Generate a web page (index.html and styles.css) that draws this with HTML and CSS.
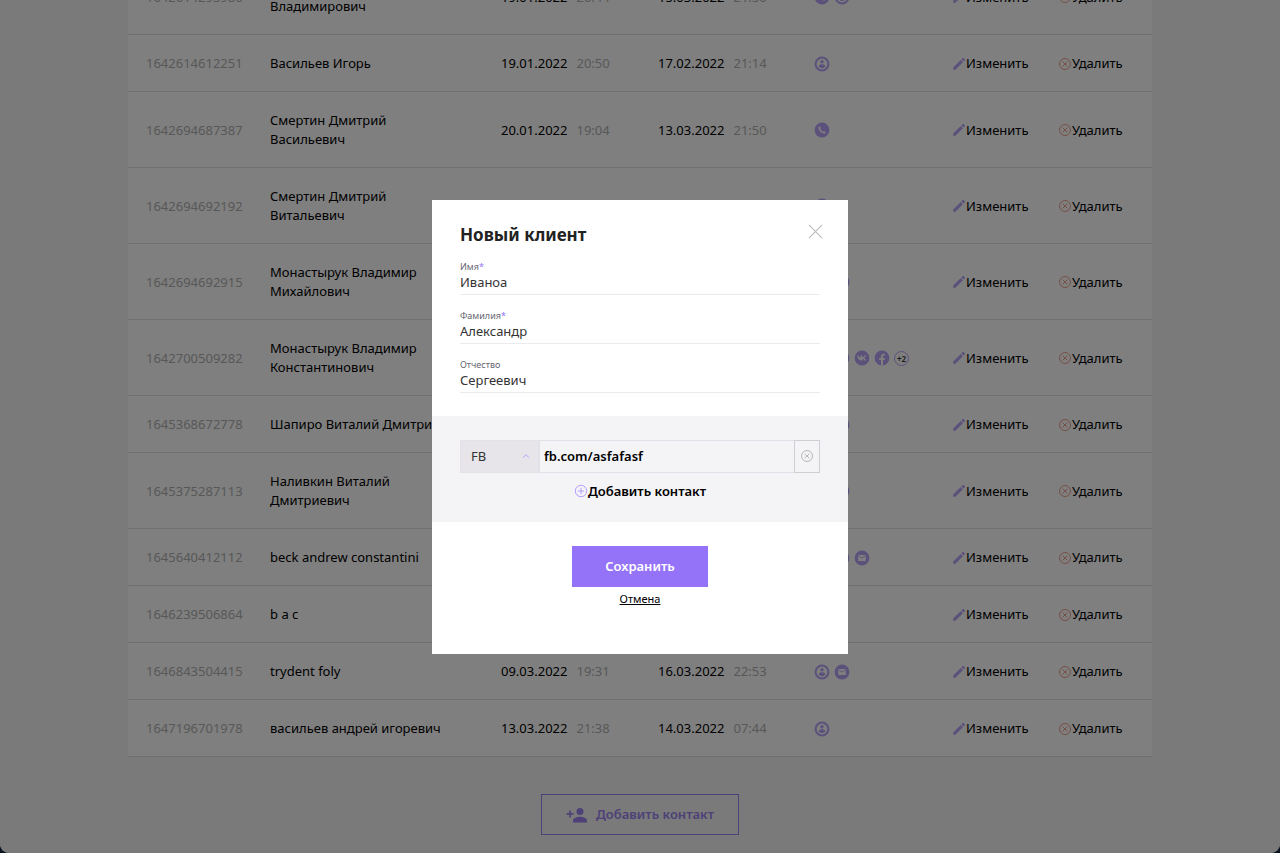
FILE: index.html
```html
<!DOCTYPE html>
<html lang="ru">
<head>
<meta charset="utf-8">
<meta name="viewport" content="width=device-width, initial-scale=1">
<title>Клиенты</title>
<link rel="stylesheet" href="styles.css">
</head>
<body>
<svg class="sprite" aria-hidden="true">
  <symbol id="user" viewBox="0 0 16 16"><circle cx="8" cy="8" r="6.4" fill="none" stroke="currentColor" stroke-width="2"/><circle cx="8" cy="5.8" r="1.7" fill="currentColor"/><path d="M4.6 10.2C5 8.8 6.900 8.300 8 8.300s3 .5 3.400 1.900C10.700 11.300 9.400 12 8 12s-2.700-.7-3.400-1.800z" fill="currentColor"/></symbol>
  <symbol id="phone" viewBox="0 0 16 16"><circle cx="8" cy="8" r="7.400" fill="currentColor"/><path d="M5.600 4.200 4.400 5.100C4.300 8.600 7.400 11.700 10.900 11.600l.9-1.200-1.700-1.300-1.100.7C7.800 9.200 6.800 8.200 6.300 7l.7-1.100z" fill="#fff"/></symbol>
  <symbol id="mail" viewBox="0 0 16 16"><circle cx="8" cy="8" r="7.400" fill="currentColor"/><rect x="4.200" y="5" width="7.600" height="6" rx=".6" fill="#fff"/><path d="m4.600 5.900 3.400 2.200 3.400-2.200" fill="none" stroke="currentColor" stroke-width=".9"/></symbol>
  <symbol id="vk" viewBox="0 0 16 16"><circle cx="8" cy="8" r="7.400" fill="currentColor"/><path d="M3.200 5.500h1.500c.3 1.500.9 2.500 1.700 2.800V5.500h2v2.100c.8-.2 1.500-1.100 1.900-2.100h1.600c-.3 1.100-1 2-1.800 2.500.9.500 1.700 1.300 2.100 2.500h-1.700c-.4-.9-1.100-1.500-2.100-1.700v1.700h-.6C5.100 10.500 3.300 8.700 3.200 5.500z" fill="#fff"/></symbol>
  <symbol id="fb" viewBox="0 0 16 16"><circle cx="8" cy="8" r="7.400" fill="currentColor"/><path d="M7 15.400V10H5.200V8H7V6.500c0-1.900 1-2.800 2.600-2.800.6 0 1.100.1 1.400.1v1.700h-.9C9.300 5.500 9 6 9 6.600V8h1.900l-.3 2H9v5.400z" fill="#fff"/></symbol>
  <symbol id="pencil" viewBox="0 0 14 14"><path d="M1.200 10.600 8.700 3.100l2.200 2.200-7.500 7.500H1.200zM9.400 2.400l1.300-1.300c.3-.3.600-.3.900 0l1.300 1.300c.3.300.3.600 0 .9l-1.300 1.300z" fill="currentColor"/></symbol>
  <symbol id="cancel" viewBox="0 0 14 14"><g fill="none" stroke="currentColor"><circle cx="7" cy="7" r="5.500"/><path d="m4.700 4.700 4.600 4.600m0-4.600L4.700 9.300"/></g></symbol>
  <symbol id="plus" viewBox="0 0 14 14"><g fill="none" stroke="currentColor"><circle cx="7" cy="7" r="5.700"/><path d="M7 3.800v6.400M3.800 7h6.400"/></g></symbol>
</svg>

<div class="window">
  <main class="page">
    <table class="clients">
      <colgroup><col class="col-id"><col><col class="col-created"><col class="col-changed"><col class="col-contacts"><col class="col-edit"><col class="col-delete"></colgroup>
      <tbody>
        <tr><td class="id">1642614293980</td><td class="name">Смертин Дмитрий Владимирович</td><td>19.01.2022<span class="time">20:44</span></td><td>15.03.2022<span class="time">21:50</span></td><td><div class="contacts"><svg><use href="#phone"/></svg><svg><use href="#user"/></svg></div></td><td><button class="action edit"><svg><use href="#pencil"/></svg>Изменить</button></td><td><button class="action delete"><svg><use href="#cancel"/></svg>Удалить</button></td></tr>
        <tr><td class="id">1642614612251</td><td class="name">Васильев Игорь</td><td>19.01.2022<span class="time">20:50</span></td><td>17.02.2022<span class="time">21:14</span></td><td><div class="contacts"><svg><use href="#user"/></svg></div></td><td><button class="action edit"><svg><use href="#pencil"/></svg>Изменить</button></td><td><button class="action delete"><svg><use href="#cancel"/></svg>Удалить</button></td></tr>
        <tr><td class="id">1642694687387</td><td class="name">Смертин Дмитрий Васильевич</td><td>20.01.2022<span class="time">19:04</span></td><td>13.03.2022<span class="time">21:50</span></td><td><div class="contacts"><svg><use href="#phone"/></svg></div></td><td><button class="action edit"><svg><use href="#pencil"/></svg>Изменить</button></td><td><button class="action delete"><svg><use href="#cancel"/></svg>Удалить</button></td></tr>
        <tr><td class="id">1642694692192</td><td class="name">Смертин Дмитрий Витальевич</td><td></td><td></td><td><div class="contacts"><svg><use href="#user"/></svg></div></td><td><button class="action edit"><svg><use href="#pencil"/></svg>Изменить</button></td><td><button class="action delete"><svg><use href="#cancel"/></svg>Удалить</button></td></tr>
        <tr><td class="id">1642694692915</td><td class="name">Монастырук Владимир Михайлович</td><td></td><td></td><td><div class="contacts"><svg><use href="#phone"/></svg><svg><use href="#user"/></svg></div></td><td><button class="action edit"><svg><use href="#pencil"/></svg>Изменить</button></td><td><button class="action delete"><svg><use href="#cancel"/></svg>Удалить</button></td></tr>
        <tr><td class="id">1642700509282</td><td class="name">Монастырук Владимир Константинович</td><td></td><td></td><td><div class="contacts"><svg><use href="#phone"/></svg><svg><use href="#mail"/></svg><svg><use href="#vk"/></svg><svg><use href="#fb"/></svg><span class="more">+2</span></div></td><td><button class="action edit"><svg><use href="#pencil"/></svg>Изменить</button></td><td><button class="action delete"><svg><use href="#cancel"/></svg>Удалить</button></td></tr>
        <tr><td class="id">1645368672778</td><td class="name one-line">Шапиро Виталий Дмитриевич</td><td></td><td></td><td><div class="contacts"><svg><use href="#phone"/></svg><svg><use href="#user"/></svg></div></td><td><button class="action edit"><svg><use href="#pencil"/></svg>Изменить</button></td><td><button class="action delete"><svg><use href="#cancel"/></svg>Удалить</button></td></tr>
        <tr><td class="id">1645375287113</td><td class="name">Наливкин Виталий Дмитриевич</td><td></td><td></td><td><div class="contacts"><svg><use href="#phone"/></svg><svg><use href="#mail"/></svg></div></td><td><button class="action edit"><svg><use href="#pencil"/></svg>Изменить</button></td><td><button class="action delete"><svg><use href="#cancel"/></svg>Удалить</button></td></tr>
        <tr><td class="id">1645640412112</td><td class="name">beck andrew constantini</td><td></td><td></td><td><div class="contacts"><svg><use href="#phone"/></svg><svg><use href="#user"/></svg><svg><use href="#mail"/></svg></div></td><td><button class="action edit"><svg><use href="#pencil"/></svg>Изменить</button></td><td><button class="action delete"><svg><use href="#cancel"/></svg>Удалить</button></td></tr>
        <tr><td class="id">1646239506864</td><td class="name">b a c</td><td></td><td></td><td></td><td><button class="action edit"><svg><use href="#pencil"/></svg>Изменить</button></td><td><button class="action delete"><svg><use href="#cancel"/></svg>Удалить</button></td></tr>
        <tr><td class="id">1646843504415</td><td class="name">trydent foly</td><td>09.03.2022<span class="time">19:31</span></td><td>16.03.2022<span class="time">22:53</span></td><td><div class="contacts"><svg><use href="#user"/></svg><svg><use href="#mail"/></svg></div></td><td><button class="action edit"><svg><use href="#pencil"/></svg>Изменить</button></td><td><button class="action delete"><svg><use href="#cancel"/></svg>Удалить</button></td></tr>
        <tr><td class="id">1647196701978</td><td class="name">васильев андрей игоревич</td><td>13.03.2022<span class="time">21:38</span></td><td>14.03.2022<span class="time">07:44</span></td><td><div class="contacts"><svg><use href="#user"/></svg></div></td><td><button class="action edit"><svg><use href="#pencil"/></svg>Изменить</button></td><td><button class="action delete"><svg><use href="#cancel"/></svg>Удалить</button></td></tr>
      </tbody>
    </table>
    <button class="add-client">
      <svg viewBox="0 0 22 16"><circle cx="14" cy="4.500" r="3.500" fill="currentColor"/><path d="M7 15.500v-2c0-2.500 4.500-3.700 7-3.700s7 1.200 7 3.700v2zM3.200 3.500h1.700v2.600h2.600v1.700H4.900v2.600H3.200V7.800H.6V6.100h2.600z" fill="currentColor"/></svg>
      Добавить контакт
    </button>
  </main>

  <div class="overlay">
    <section class="modal" role="dialog" aria-modal="true" aria-labelledby="modal-title">
      <form>
        <div class="fields">
          <header class="modal-head">
            <h2 id="modal-title">Новый клиент</h2>
            <button class="close" type="button" aria-label="Закрыть"><svg viewBox="0 0 16 16"><path d="m1 1 14 14M15 1 1 15" fill="none" stroke="currentColor" stroke-width="1.200"/></svg></button>
          </header>
          <div class="field"><label for="first">Имя<span class="star">*</span></label><input id="first" type="text" value="Иваноа"></div>
          <div class="field"><label for="last">Фамилия<span class="star">*</span></label><input id="last" type="text" value="Александр"></div>
          <div class="field"><label for="middle">Отчество</label><input id="middle" type="text" value="Сергеевич"></div>
        </div>
        <div class="contact-area">
          <div class="contact-row">
            <div class="select-wrap">
              <select aria-label="Тип контакта"><option>FB</option></select>
              <svg class="chevron" viewBox="0 0 8 6"><path d="m1 4.700 3-3 3 3" fill="none" stroke="currentColor"/></svg>
            </div>
            <input class="contact-value" type="text" value="fb.com/asfafasf" aria-label="Контакт">
            <button class="contact-remove" type="button" aria-label="Удалить контакт"><svg><use href="#cancel"/></svg></button>
          </div>
          <button class="add-contact" type="button"><svg><use href="#plus"/></svg>Добавить контакт</button>
        </div>
        <footer class="modal-foot">
          <button class="save" type="submit">Сохранить</button>
          <button class="dismiss" type="button">Отмена</button>
        </footer>
      </form>
    </section>
  </div>
</div>
</body>
</html>
```
FILE: styles.css
```css
* { box-sizing: border-box; }

body {
  margin: 0;
  background: #0b1420;
  color: #000;
  font: 13px/19px "Noto Sans", "Open Sans", sans-serif;
}

button, input, select {
  margin: 0;
  padding: 0;
  border: 0;
  border-radius: 0;
  background: none;
  color: inherit;
  font: inherit;
}

button { cursor: pointer; }

.sprite { display: none; }

.window {
  position: relative;
  height: 100vh;
  overflow: hidden;
  border-radius: 0 0 9px 9px;
  background: #f5f5f5;
}

.page {
  display: flex;
  flex-direction: column;
  justify-content: flex-end;
  align-items: center;
  gap: 37px;
  width: 80%;
  height: 100%;
  margin: 0 auto;
  padding-bottom: 18px;
}

.clients {
  flex: none;
  width: 100%;
  table-layout: fixed;
  border-collapse: collapse;
  background: #fff;
}

.col-id { width: 142px; }
.col-created { width: 157px; }
.col-changed { width: 156px; }
.col-contacts { width: 138px; }
.col-edit { width: 106px; }
.col-delete { width: 94px; }

.clients td {
  padding: 19px 0 18px;
  border-bottom: 1px solid #dfdee4;
  vertical-align: middle;
  white-space: nowrap;
}

.clients .id { padding-left: 18px; color: #b0b0b0; }
.clients .name { padding-right: 38px; white-space: normal; }
.clients .one-line { white-space: nowrap; }

.time { margin-left: 9px; color: #b0b0b0; }

.contacts {
  display: flex;
  align-items: center;
  gap: 4px;
  color: #b6a2f6;
}

.contacts svg { width: 16px; height: 16px; }

.more {
  width: 15px;
  height: 15px;
  border: 1px solid #b6a2f6;
  border-radius: 50%;
  color: #333;
  font-size: 8px;
  font-weight: 600;
  line-height: 13px;
  text-align: center;
}

.action {
  display: flex;
  align-items: center;
}

.action svg { width: 14px; height: 14px; }
.edit svg { color: #b6a2f6; }
.delete svg { color: #ee9f8a; }

.add-client {
  display: flex;
  flex: none;
  align-items: center;
  gap: 8px;
  padding: 10px 24px;
  border: 1px solid #9a82ee;
  color: #9a82ee;
  font-weight: 600;
}

.add-client svg { width: 22px; height: 16px; }

.overlay {
  position: absolute;
  inset: 0;
  display: flex;
  align-items: center;
  justify-content: center;
  background: rgba(0, 0, 0, 0.5);
}

.modal {
  width: 416px;
  background: #fff;
}

.fields {
  display: flex;
  flex-direction: column;
  gap: 14px;
  padding: 24px 28px 23px;
}

.modal-head {
  display: flex;
  justify-content: space-between;
  align-items: flex-start;
  margin-bottom: 1px;
}

.modal-head h2 {
  margin: 0;
  color: #222;
  font-size: 17px;
  line-height: 21px;
}

.close {
  display: flex;
  margin-right: -3px;
  color: #bbb;
}

.close svg { width: 15px; height: 15px; }

.field {
  display: flex;
  flex-direction: column;
  border-bottom: 1px solid #ebebed;
}

.field label {
  color: #666672;
  font-size: 9px;
  line-height: 13px;
}

.star { color: #9473f8; }

.field input {
  height: 21px;
  padding-bottom: 3px;
  color: #333;
}

.contact-area {
  display: flex;
  flex-direction: column;
  align-items: center;
  gap: 9px;
  padding: 24px 28px 21px;
  background: #f4f3f6;
}

.contact-row {
  display: flex;
  width: 100%;
  height: 33px;
}

.select-wrap {
  position: relative;
  flex: none;
  width: 79px;
}

.select-wrap select {
  width: 100%;
  height: 100%;
  padding: 0 10px;
  appearance: none;
  border: 1px solid #e4e2e8;
  background: #e7e5ea;
  color: #333;
}

.chevron {
  position: absolute;
  top: 13px;
  right: 9px;
  width: 8px;
  height: 6px;
  color: #b79dff;
  pointer-events: none;
}

.contact-value {
  flex: 1;
  min-width: 0;
  padding: 0 4px;
  border: 1px solid #e2e0e8;
  border-right: 0;
  font-weight: 600;
}

.contact-remove {
  display: flex;
  flex: none;
  align-items: center;
  justify-content: center;
  width: 26px;
  border: 1px solid #d0cfd6;
  color: #b8b8b8;
}

.contact-remove svg,
.add-contact svg { width: 14px; height: 14px; }

.add-contact {
  display: flex;
  align-items: center;
  font-weight: 600;
}

.add-contact svg { color: #b79dff; }

.modal-foot {
  display: flex;
  flex-direction: column;
  align-items: center;
  gap: 4px;
  padding: 24px 28px 47px;
}

.save {
  padding: 11px 33px;
  background: #9473f8;
  color: #fff;
  font-weight: 600;
}

.dismiss {
  font-size: 11px;
  line-height: 16px;
  text-decoration: underline;
}
```
